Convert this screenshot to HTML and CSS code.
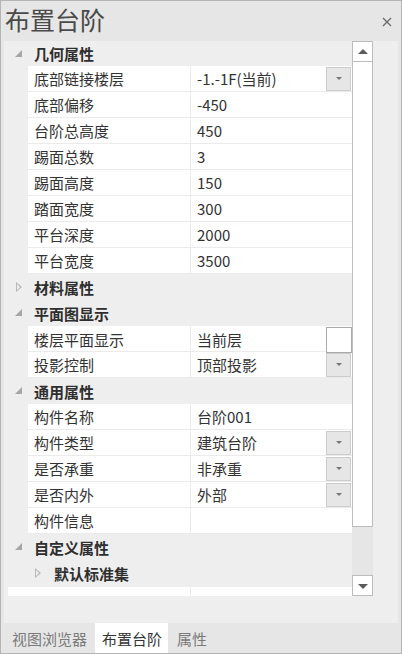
FILE: index.html
```html
<!DOCTYPE html>
<html lang="zh">
<head>
<meta charset="utf-8">
<link rel="stylesheet" href="styles.css">
</head>
<body>
<div class="window">
  <div class="header">
    <span class="title">布置台阶</span>
    <svg class="close" width="10" height="10" viewBox="0 0 10 10"><path d="M1 1L9 9M9 1L1 9" stroke="#6a6a6a" stroke-width="1.3" fill="none"/></svg>
  </div>
  <div class="panel">
    <div class="viewport">
      <div class="list">
        <div class="cat first"><span class="tri-open"></span><span class="cat-text">几何属性</span></div>
        <div class="row"><div class="lab">底部链接楼层</div><div class="val"><span>-1.-1F(当前)</span><span class="dd"><i></i></span></div></div>
        <div class="row"><div class="lab">底部偏移</div><div class="val"><span>-450</span></div></div>
        <div class="row"><div class="lab">台阶总高度</div><div class="val"><span>450</span></div></div>
        <div class="row"><div class="lab">踢面总数</div><div class="val"><span>3</span></div></div>
        <div class="row"><div class="lab">踢面高度</div><div class="val"><span>150</span></div></div>
        <div class="row"><div class="lab">踏面宽度</div><div class="val"><span>300</span></div></div>
        <div class="row"><div class="lab">平台深度</div><div class="val"><span>2000</span></div></div>
        <div class="row"><div class="lab">平台宽度</div><div class="val"><span>3500</span></div></div>
        <div class="cat"><span class="tri-closed"></span><span class="cat-text">材料属性</span></div>
        <div class="cat"><span class="tri-open"></span><span class="cat-text">平面图显示</span></div>
        <div class="row"><div class="lab">楼层平面显示</div><div class="val"><span>当前层</span><span class="chk"></span></div></div>
        <div class="row"><div class="lab">投影控制</div><div class="val"><span>顶部投影</span><span class="dd"><i></i></span></div></div>
        <div class="cat"><span class="tri-open"></span><span class="cat-text">通用属性</span></div>
        <div class="row"><div class="lab">构件名称</div><div class="val"><span>台阶001</span></div></div>
        <div class="row"><div class="lab">构件类型</div><div class="val"><span>建筑台阶</span><span class="dd"><i></i></span></div></div>
        <div class="row"><div class="lab">是否承重</div><div class="val"><span>非承重</span><span class="dd"><i></i></span></div></div>
        <div class="row"><div class="lab">是否内外</div><div class="val"><span>外部</span><span class="dd"><i></i></span></div></div>
        <div class="row"><div class="lab">构件信息</div><div class="val"><span></span></div></div>
        <div class="cat"><span class="tri-open"></span><span class="cat-text">自定义属性</span></div>
        <div class="cat sub"><span class="tri-closed"></span><span class="cat-text">默认标准集</span></div>
        <div class="row tail"><div class="lab"></div><div class="val"></div></div>
      </div>
      <div class="scrollbar">
        <div class="sb-btn"><i class="up"></i></div>
        <div class="sb-thumb"></div>
        <div class="sb-track"></div>
        <div class="sb-btn"><i class="down"></i></div>
      </div>
    </div>
  </div>
  <div class="tabs">
    <span class="tab">视图浏览器</span>
    <span class="tab active">布置台阶</span>
    <span class="tab">属性</span>
  </div>
</div>
</body>
</html>
```
FILE: styles.css
```css
* { box-sizing: border-box; margin: 0; padding: 0; }
html, body { width: 402px; height: 654px; overflow: hidden; }
body {
  font-family: "Noto Sans CJK SC", "Noto Sans", sans-serif;
  color: #333;
  background: #e6e6e6;
}
.window {
  width: 402px;
  height: 654px;
  border: 1px solid #b4b4b4;
  background: #e6e6e6;
  display: flex;
  flex-direction: column;
}
.header {
  height: 40px;
  display: flex;
  align-items: center;
  justify-content: space-between;
  padding: 0 9px 0 4px;
}
.title {
  font-size: 25px;
  color: #4a4a4a;
  line-height: 1;
  margin-top: -3px;
}
.close { margin-top: 2px; }
.panel {
  margin: 0 3px;
  height: 582px;
  background: #eeeeee;
}
.viewport {
  height: 555px;
  display: flex;
  overflow: hidden;
}
.list {
  width: 348px;
  height: 555px;
  overflow: hidden;
  font-size: 15px;
}
.cat {
  height: 26px;
  display: flex;
  align-items: center;
  position: relative;
}
.cat.first { height: 25px; }
.cat-text {
  font-weight: bold;
  color: #2e2e2e;
  margin-left: 30px;
  line-height: 1;
}
.cat.sub .cat-text { margin-left: 50px; }
.tri-open {
  position: absolute;
  left: 11px;
  top: 9px;
  width: 0; height: 0;
  border-left: 7px solid transparent;
  border-bottom: 7px solid #a6a6a6;
}
.tri-closed {
  position: absolute;
  left: 12px;
  top: 8px;
  width: 6px;
  height: 10px;
}
.tri-closed::before {
  content: "";
  position: absolute;
  left: 0; top: 0;
  border-top: 5px solid transparent;
  border-bottom: 5px solid transparent;
  border-left: 6px solid #b8b8b8;
}
.tri-closed::after {
  content: "";
  position: absolute;
  left: 1px; top: 2px;
  border-top: 3px solid transparent;
  border-bottom: 3px solid transparent;
  border-left: 3.5px solid #eeeeee;
}
.cat.sub .tri-closed { left: 31px; }
.row {
  height: 26px;
  display: grid;
  grid-template-columns: 163px 1fr;
  margin-left: 24px;
  background: #fff;
  border-bottom: 1px solid #ebebeb;
}
.row.tail {
  margin-left: 4px;
  margin-top: 1px;
  grid-template-columns: 183px 1fr;
  border-bottom: none;
}
.lab {
  border-right: 1px solid #ebebeb;
  padding-left: 6px;
  display: flex;
  align-items: center;
  color: #333;
  line-height: 1;
}
.val {
  display: flex;
  align-items: center;
  justify-content: space-between;
  padding-left: 6px;
  color: #333;
  line-height: 1;
  position: relative;
}
.dd {
  width: 25px;
  height: 24px;
  margin-right: 1px;
  background: #e6e6e6;
  border: 1px solid #cccccc;
  display: flex;
  align-items: center;
  justify-content: center;
}
.dd i {
  width: 0; height: 0;
  border-left: 3px solid transparent;
  border-right: 3px solid transparent;
  border-top: 3px solid #777;
}
.chk {
  width: 26px;
  height: 26px;
  margin-top: 1px;
  background: #fff;
  border: 1px solid #aaaaaa;
}
.scrollbar {
  width: 21px;
  height: 555px;
  display: flex;
  flex-direction: column;
  background: #e6e6e6;
}
.sb-btn {
  height: 21px;
  background: #fff;
  border: 1px solid #bcbcbc;
  display: flex;
  align-items: center;
  justify-content: center;
}
.sb-btn i { width: 0; height: 0; border-left: 5px solid transparent; border-right: 5px solid transparent; }
.sb-btn i.up { border-bottom: 5px solid #5c5c5c; }
.sb-btn i.down { border-top: 5px solid #5c5c5c; margin-top: 2px; }
.sb-thumb {
  height: 465px;
  background: #fff;
  border: 1px solid #bcbcbc;
  border-top: none;
}
.sb-track { flex: 1; background: #e6e6e6; }
.tabs {
  height: 30px;
  display: flex;
  align-items: stretch;
  padding-left: 6px;
}
.tab {
  font-size: 15px;
  color: #7a7a7a;
  display: flex;
  align-items: center;
  padding: 0 5px;
  line-height: 1;
}
.tab.active {
  background: #fff;
  color: #333;
  padding: 0 6px 0 7px;
  margin: 0 4px 0 3px;
}
```
